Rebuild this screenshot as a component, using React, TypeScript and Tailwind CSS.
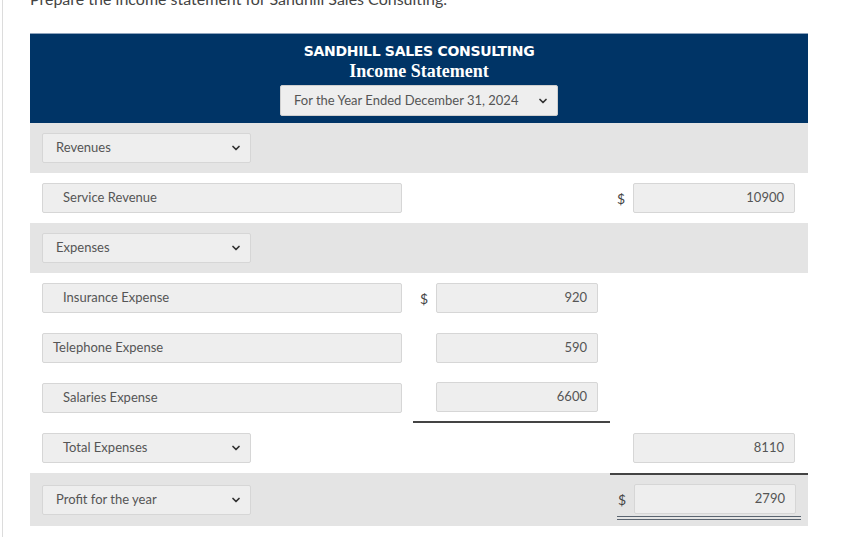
import { ChevronDown } from 'lucide-react';

const field =
  'h-[30px] flex items-center bg-[#eeeeee] border border-[#d6d6d6] rounded-[2px] text-[13px] text-[#555]';

function Select({ label, indent = false }: { label: string; indent?: boolean }) {
  return (
    <div className={`${field} w-[209px] justify-between pr-[8px] ${indent ? 'pl-[20px]' : 'pl-[13px]'}`}>
      <span>{label}</span>
      <ChevronDown size={12} strokeWidth={3.5} className="text-[#333]" />
    </div>
  );
}

function Label({ label, pad = 20 }: { label: string; pad?: number }) {
  return (
    <div className={`${field} w-[360px] ${pad === 20 ? 'pl-[20px]' : 'pl-[10px]'}`}>
      {label}
    </div>
  );
}

function Amount({ value, dollar = false }: { value: string; dollar?: boolean }) {
  return (
    <div className="flex items-center">
      <span className="w-[23px] pr-[8px] text-right text-[14px] text-[#444]">{dollar ? '$' : ''}</span>
      <div className={`${field} w-[162px] justify-end pr-[10px]`}>{value}</div>
    </div>
  );
}

type Row = {
  label: React.ReactNode;
  mid?: React.ReactNode;
  right?: React.ReactNode;
  shaded?: boolean;
  midLine?: boolean;
};

export default function App() {
  const rows: Row[] = [
    { label: <Select label="Revenues" />, shaded: true },
    { label: <Label label="Service Revenue" />, right: <Amount value="10900" dollar /> },
    { label: <Select label="Expenses" />, shaded: true },
    { label: <Label label="Insurance Expense" />, mid: <Amount value="920" dollar /> },
    { label: <Label label="Telephone Expense" pad={10} />, mid: <Amount value="590" /> },
    { label: <Label label="Salaries Expense" />, mid: <Amount value="6600" />, midLine: true },
    { label: <Select label="Total Expenses" indent />, right: <Amount value="8110" /> },
  ];

  return (
    <div className="min-h-[548px] bg-white font-['Lato','Noto_Sans',sans-serif] text-[#555] overflow-hidden">
      <div className="ml-[2px] border-l border-[#dcdcdc] min-h-[548px] pl-[27px]">
        <p className="text-[16px] leading-[20px] -mt-[11px] text-[#444]">
          Prepare the income statement for Sandhill Sales Consulting.
        </p>
        <div className="w-[778px] mt-[24px]">
          <div className="h-[90px] bg-[#003466] border-t border-[#8ea3bd] flex flex-col items-center pt-[8px]">
            <div className="text-white font-bold text-[14px] leading-[18px] font-['DejaVu_Sans',sans-serif] tracking-[-0.3px]">
              SANDHILL SALES CONSULTING
            </div>
            <div className="text-white font-bold text-[18px] leading-[23px] font-['Liberation_Serif',serif]">
              Income Statement
            </div>
            <div className="mt-[2px] h-[31px] w-[278px] bg-[#eeeeee] border border-[#cfcfcf] rounded-[2px] flex items-center justify-between pl-[13px] pr-[8px] text-[13px] text-[#555]">
              <span>For the Year Ended December 31, 2024</span>
              <ChevronDown size={12} strokeWidth={3.5} className="text-[#333]" />
            </div>
          </div>

          {rows.map((r, i) => (
            <div
              key={i}
              className={`grid grid-cols-[383px_197px_198px] h-[50px] ${r.shaded ? 'bg-[#e4e4e4]' : ''}`}
            >
              <div className="flex items-center pl-[12px]">{r.label}</div>
              <div className={`flex items-center ${r.midLine ? 'border-b-2 border-[#444]' : ''}`}>{r.mid}</div>
              <div className="flex items-center">{r.right}</div>
            </div>
          ))}

          <div className="grid grid-cols-[383px_197px_198px] h-[53px] bg-[#e4e4e4]">
            <div className="flex items-center pl-[12px]">
              <Select label="Profit for the year" />
            </div>
            <div />
            <div className="border-t-2 border-[#444] flex items-start pt-[9px]">
              <div className="ml-[7px] w-[184px] border-b-[4px] border-double border-[#5a6470] pb-[2px]">
                <div className="flex items-center -ml-[7px]">
                  <span className="w-[24px] pr-[8px] text-right text-[14px] text-[#444]">$</span>
                  <div className={`${field} w-[162px] justify-end pr-[10px]`}>2790</div>
                </div>
              </div>
            </div>
          </div>
        </div>
      </div>
    </div>
  );
}
